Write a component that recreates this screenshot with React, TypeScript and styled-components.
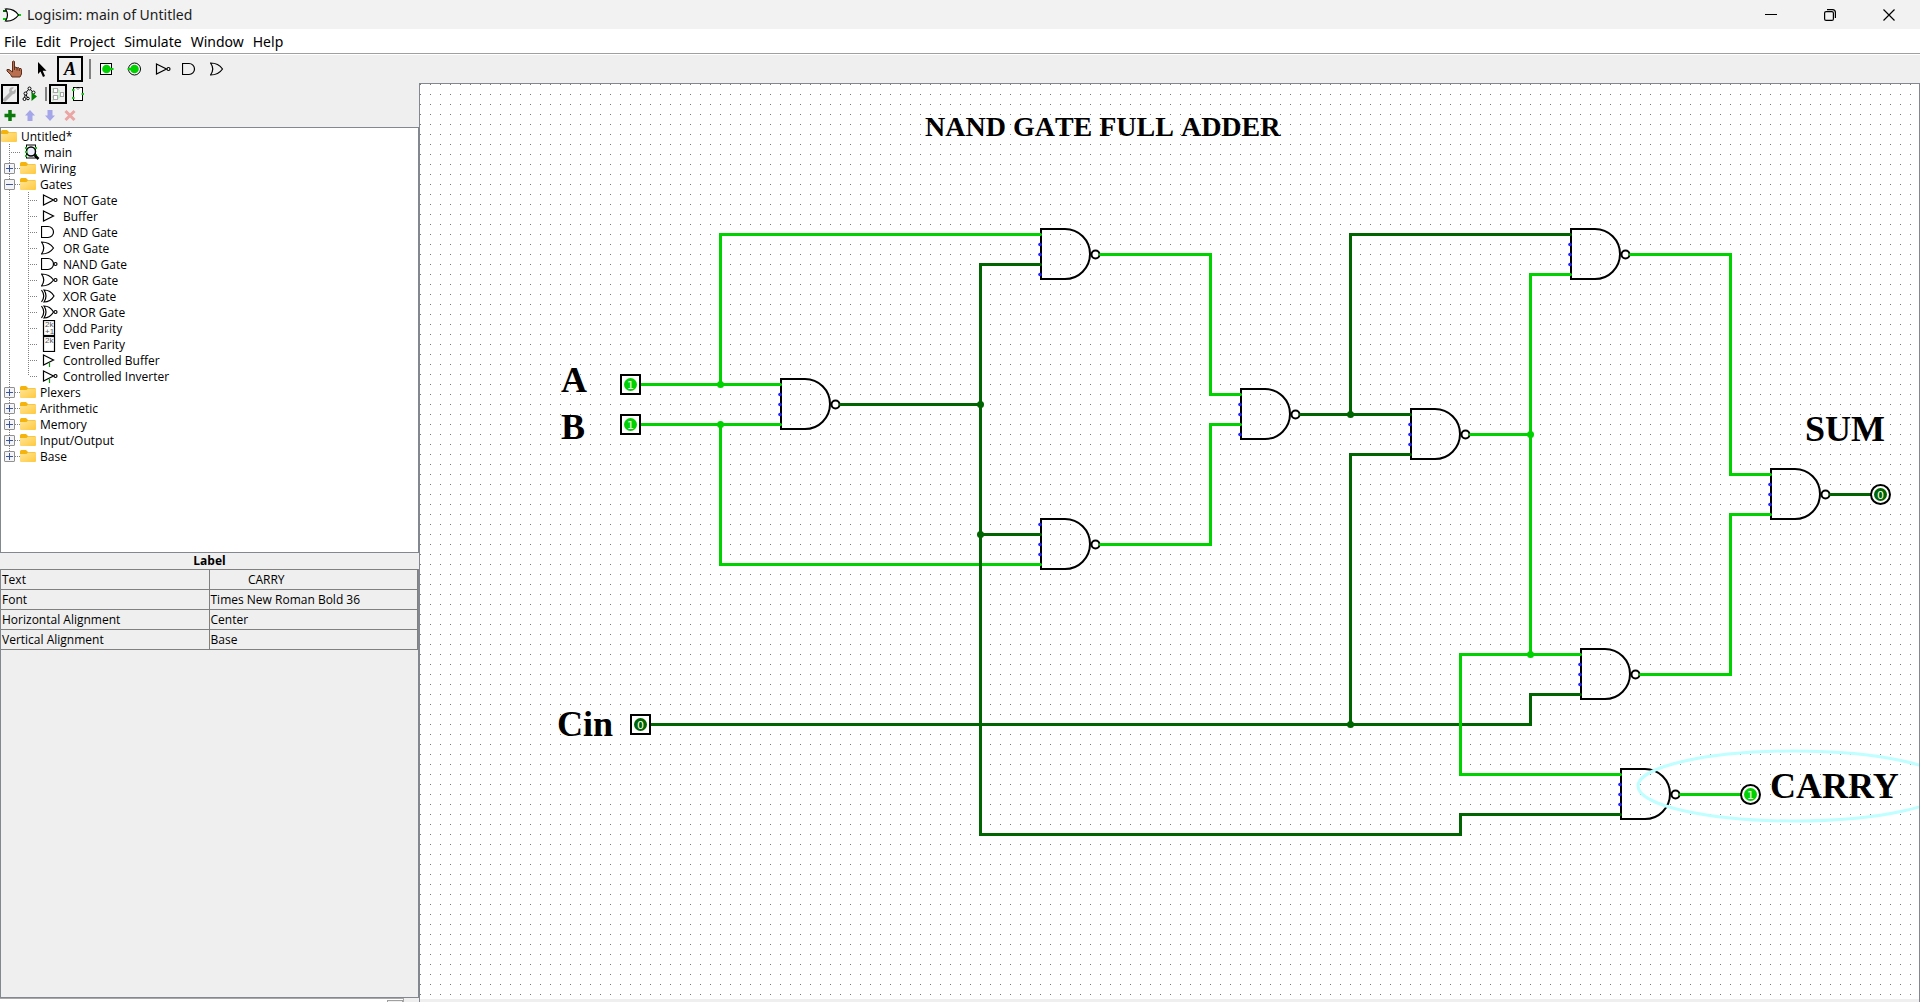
import React, { useState } from "react";
import styled, { createGlobalStyle } from "styled-components";

const ON = "#00d200";
const OFF = "#006400";
const EDGE = "#828790";
const PANEL = "#efefef";

const GlobalStyle = createGlobalStyle`
  * { box-sizing: border-box; }
  body { margin: 0; overflow: hidden; background: ${PANEL}; }
  button { font: inherit; color: inherit; background: none; border: 0; padding: 0; margin: 0; }
  svg { display: block; }
`;

const Window = styled.div`
  display: flex;
  flex-direction: column;
  height: 100vh;
  background: ${PANEL};
  color: #000;
  font: 12px/16px "Open Sans", "Noto Sans", sans-serif;
`;

const TitleBar = styled.header`
  display: flex;
  align-items: center;
  gap: 6px;
  height: 29px;
  padding: 0 2px 0 3px;
  background: #f2f2f2;
  font: 14px/20px "Noto Sans", sans-serif;
`;

const Title = styled.h1`
  flex: 1;
  margin: 0;
  font: inherit;
  color: #1c1c1c;
`;

const WindowControls = styled.div`
  display: flex;
`;

const WindowButton = styled.button`
  display: grid;
  place-items: center;
  width: 59px;
  height: 28px;
`;

const MenuBar = styled.nav`
  display: flex;
  gap: 9px;
  height: 26px;
  padding: 0 4px;
  background: #fff;
  border-bottom: 1px solid #fff;
  box-shadow: inset 0 -1px 0 #a0a0a0;
  font: 14px/25px "Noto Sans", sans-serif;
`;

const MenuItem = styled.button`
  line-height: 25px;
`;

const Toolbar = styled.div`
  display: flex;
  align-items: center;
  height: 28px;
`;

const ToolButton = styled.button<{ $selected?: boolean }>`
  display: grid;
  place-items: center;
  width: 26px;
  height: 26px;
  margin: 0 1px;
  box-shadow: inset 0 0 0 2px ${(p) => (p.$selected ? "#000" : "transparent")};
`;

const Separator = styled.span<{ $small?: boolean }>`
  width: 2px;
  height: ${(p) => (p.$small ? 14 : 20)}px;
  margin: 0 ${(p) => (p.$small ? 1 : 2)}px 0 5px;
  background: #808080;
`;

const Workspace = styled.main`
  display: grid;
  grid-template-columns: 419px minmax(0, 1fr);
  flex: 1;
  min-height: 0;
`;

const Sidebar = styled.aside`
  display: flex;
  flex-direction: column;
  min-height: 0;
`;

const MiniBar = styled.div<{ $tall?: boolean }>`
  display: flex;
  align-items: center;
  height: ${(p) => (p.$tall ? 23 : 21)}px;
  padding-bottom: ${(p) => (p.$tall ? 2 : 0)}px;
`;

const MiniButton = styled.button<{ $selected?: boolean }>`
  display: grid;
  place-items: center;
  width: 18px;
  height: 20px;
  margin: 0 1px;
  box-shadow: inset 0 0 0 2px ${(p) => (p.$selected ? "#000" : "transparent")};
`;

const Tree = styled.ul`
  flex: 425 1 0;
  min-height: 0;
  margin: 0;
  padding: 0;
  list-style: none;
  overflow: hidden;
  background: #fff;
  border: 1px solid ${EDGE};
`;

const TreeRow = styled.li`
  display: flex;
  align-items: center;
  gap: 4px;
  height: 16px;
  white-space: nowrap;
`;

const TreeLabel = styled.span`
  padding-top: 2px;
`;

const Guides = styled.span`
  display: flex;
  align-self: stretch;
  margin-right: -4px;
`;

const Guide = styled.span<{ $wide?: boolean }>`
  position: relative;
  display: flex;
  align-items: center;
  width: ${(p) => (p.$wide ? 21 : 19)}px;
  padding: 0 ${(p) => (p.$wide ? 3 : 0)}px 0 8px;
`;

const VerticalDots = styled.span<{ $last?: boolean }>`
  align-self: flex-start;
  width: 1px;
  height: ${(p) => (p.$last ? 8 : 16)}px;
  background: repeating-linear-gradient(#808080 0 1px, transparent 1px 2px);
`;

const HorizontalDots = styled.span`
  flex: 1;
  height: 1px;
  background: repeating-linear-gradient(90deg, transparent 0 1px, #808080 1px 2px);
`;

const Expander = styled.button`
  position: absolute;
  left: 3px;
  top: 3px;
  display: grid;
  place-items: center;
  width: 11px;
  height: 11px;
  background: #f4f4f6;
  border: 1px solid #919191;
  border-radius: 1px;
`;

const LeafIcon = styled.span`
  margin-left: 4px;
`;

const Attributes = styled.section`
  flex: 446 1 0;
  display: flex;
  flex-direction: column;
  min-height: 0;
`;

const AttributesTitle = styled.h2`
  margin: 0;
  font-size: 12px;
  line-height: 16px;
  text-align: center;
`;

const AttributesPane = styled.div`
  flex: 1;
  border: 1px solid ${EDGE};
  border-top: 0;
`;

const Table = styled.table`
  width: 100%;
  border-spacing: 0;
  table-layout: fixed;
  border-top: 1px solid #808080;
`;

const Cell = styled.td`
  height: 20px;
  padding: 0 1px;
  border-bottom: 1px solid #808080;
  border-right: 1px solid #808080;
  line-height: 19px;
  white-space: pre;
`;

const NameCell = styled(Cell).attrs({ as: "th", scope: "row" })`
  font-weight: 400;
  text-align: left;
`;

const ZoomBar = styled.div`
  display: flex;
  justify-content: flex-end;
  height: 4px;
  margin-right: 15px;
  overflow: hidden;
  background: #fff;
  border: solid #a8a8a8;
  border-width: 1px 1px 0 0;
`;

const ZoomStep = styled.button`
  width: 16px;
  height: 16px;
  margin-top: 1px;
  background: ${PANEL};
  border: 1px solid #a0a0a0;
`;

const CanvasPane = styled.section`
  display: flex;
  flex-direction: column;
  min-width: 0;
  min-height: 0;
  border: 1px solid ${EDGE};
  border-bottom: 0;
`;

const Drawing = styled.svg`
  flex: 1;
  width: 100%;
  min-height: 0;
  background: #fff;
`;

const ScrollTrack = styled.div`
  height: 3px;
  background: ${PANEL};
`;

const Caption = styled.text<{ $kerned: boolean }>`
  font-family: "Liberation Serif", serif;
  font-weight: 700;
  font-kerning: ${(p) => (p.$kerned ? "normal" : "none")};
`;

const PinValue = styled.text`
  font: 11px "DejaVu Sans", sans-serif;
  fill: #fff;
  text-anchor: middle;
`;

/* ---------- small icons ---------- */

type GlyphKind =
  | "not" | "buffer" | "and" | "or" | "nand" | "nor" | "xor" | "xnor"
  | "odd" | "even" | "cbuffer" | "cinverter";

const OR_BODY = "M.5 2Q8.500 2 12.500 8Q8.500 14 .5 14Q5 8 .5 2Z";
const XOR_BODY = "M3 2Q9.500 2 13 8Q9.500 14 3 14Q7 8 3 2ZM.5 2Q5 8 .5 14";
const XNOR_BODY = "M3 2Q9 2 12.500 8Q9 14 3 14Q7 8 3 2ZM.5 2Q5 8 .5 14";
const AND_BODY = "M.5 2.500H7A5.500 5.500 0 0 1 7 13.500H.5Z";
const TRIANGLE = "M2.500 3L12.500 8L2.500 13Z";

const bodies: Partial<Record<GlyphKind, string>> = {
  not: TRIANGLE, buffer: TRIANGLE, cbuffer: TRIANGLE, cinverter: TRIANGLE,
  and: AND_BODY, nand: AND_BODY, or: OR_BODY, nor: OR_BODY, xor: XOR_BODY, xnor: XNOR_BODY,
};

function GateGlyph({ kind }: { kind: GlyphKind }) {
  const inverted = ["not", "nand", "nor", "xnor", "cinverter"].includes(kind);
  const controlled = kind === "cbuffer" || kind === "cinverter";
  const parity = kind === "odd" || kind === "even";
  return (
    <svg width="18" height="16" fill="none" stroke="#000" strokeWidth="1.200" aria-hidden="true">
      {controlled && <path d="M8.500 11V15" stroke="#00a000" />}
      {bodies[kind] && <path d={bodies[kind]} />}
      {inverted && <circle cx="14.500" cy="8" r="1.500" fill="#fff" />}
      {parity && (
        <>
          <rect x="2.500" y=".5" width="11" height="15" />
          <g fill="#555" stroke="none" fontSize="8" fontFamily="Liberation Sans, sans-serif">
            <text x="4" y="7">2k</text>
            {kind === "odd" && <text x="4" y="14">+1</text>}
          </g>
        </>
      )}
    </svg>
  );
}

function Folder() {
  return (
    <svg width="16" height="16" aria-hidden="true">
      <defs>
        <linearGradient id="folderFill" x1="0" y1="0" x2="1" y2="1">
          <stop offset="0" stopColor="#ffe59a" />
          <stop offset="1" stopColor="#ffc93c" />
        </linearGradient>
      </defs>
      <path d="M0 3.500Q0 2 1.500 2H6L8 4H14.500Q16 4 16 5.500V8H0Z" fill="#f5b30e" />
      <path d="M0 6H6.500L8 4.500H15Q16 4.500 16 5.500V13Q16 14 15 14H1Q0 14 0 13Z" fill="url(#folderFill)" />
    </svg>
  );
}

function CircuitIcon() {
  return (
    <svg width="16" height="16" aria-hidden="true">
      <rect x="2.500" y="1" width="9" height="13" fill="#fff" stroke="#000" />
      <circle cx="7" cy="7.500" r="4.500" fill="#eeeeff" stroke="#000" strokeWidth="1.500" />
      <path d="M1 4H3M1 8H3M1 12H3M11 4H13M11 11H13" stroke={ON} strokeWidth="2" />
      <path d="M10.500 11L14.500 15" stroke="#000" strokeWidth="2.500" />
    </svg>
  );
}

function LogoIcon() {
  return (
    <svg width="18" height="16" fill="none" aria-hidden="true">
      <path d="M0 4H5" stroke="#006400" strokeWidth="2" />
      <path d="M0 12H5M14 8H18" stroke={ON} strokeWidth="2" />
      <path d="M2.500 2Q11 1.500 15.500 8Q11 14.500 2.500 14Q6.500 8 2.500 2Z" fill="#fff" stroke="#000" strokeWidth="1.200" />
    </svg>
  );
}

function HandIcon() {
  return (
    <svg width="18" height="18" aria-hidden="true">
      <path
        d="M7.500 1.500Q8.500 .5 9.500 1.500V7.500L11 7L12 8L13.500 7.500L14.500 8.500L16 8.500L16.500 9.500V14L15 17H7L5.500 14.500L2 11V9.500L4 9.500L7.500 12Z"
        fill="#ba6f50" stroke="#5a2d1c"
      />
      <path d="M9.500 7V10M12 8V10.500M14.300 8.500V11" stroke="#5a2d1c" />
    </svg>
  );
}

function PointerIcon() {
  return (
    <svg width="18" height="18" aria-hidden="true">
      <path d="M5 2V14L7.500 11.500L10 17L12 16L9.700 10.800H13.500Z" fill="#000" />
    </svg>
  );
}

function TextIcon() {
  return (
    <svg width="22" height="22" aria-hidden="true">
      <text x="11" y="17" textAnchor="middle" fontFamily="Liberation Serif, serif" fontSize="18" fontWeight="700" fontStyle="italic">A</text>
    </svg>
  );
}

function PinIcon({ round }: { round?: boolean }) {
  return (
    <svg width="18" height="18" aria-hidden="true">
      {round
        ? <circle cx="8.500" cy="9" r="6" fill="#fff" stroke="#000" />
        : <rect x="2.500" y="3.500" width="11" height="11" fill="#fff" stroke="#000" />}
      <path d={round ? "M1.500 9H8" : "M8 9H15.500"} stroke={ON} strokeWidth="2" />
      <circle cx="8.500" cy="9" r="4.300" fill={ON} />
    </svg>
  );
}

function WrenchIcon() {
  return (
    <svg width="14" height="16" aria-hidden="true">
      <path d="M1.800 13.800L8.500 7" stroke="#b0b0b0" strokeWidth="3.500" strokeLinecap="round" />
      <path d="M12.500 3L10 5.500L8.500 4L11 1.500Q8.500 .5 6.800 2.200Q5.500 4 6.500 6.500L8 8Q10.500 9 12.200 7.200Q13.700 5.500 12.500 3Z" fill="#b0b0b0" />
    </svg>
  );
}

function SimTreeIcon() {
  return (
    <svg width="16" height="16" fill="none" stroke="#000" aria-hidden="true">
      <path d="M7 3L3.500 7L2.500 12M8 3L11.500 7M3.500 7L5.500 12" />
      <circle cx="7.500" cy="2.500" r="1.500" fill="#fff" />
      <circle cx="3.500" cy="7.500" r="1.500" fill="#fff" />
      <circle cx="11.500" cy="6.500" r="1.500" fill="#fff" />
      <circle cx="2.500" cy="13" r="1.500" fill="#fff" />
      <circle cx="6" cy="12.500" r="1.300" fill="#fff" />
      <path d="M9.500 6L15 10.500L9.500 15Z" fill="#008000" stroke="none" />
    </svg>
  );
}

function LayoutIcon() {
  return (
    <svg width="16" height="16" fill="none" aria-hidden="true">
      <path d="M2 3H4M2 6H4M2 11H4M2 14H4M7 4H9V7H12M7 12H9V9H12" stroke="#a5e8a5" />
      <g fill="#fff" stroke="#a8a8a8">
        <rect x="3.500" y="2.500" width="4" height="4" />
        <rect x="3.500" y="9.500" width="4" height="4" />
        <rect x="10.500" y="6.500" width="3" height="4" />
      </g>
    </svg>
  );
}

function AppearanceIcon() {
  return (
    <svg width="16" height="16" fill="none" aria-hidden="true">
      <rect x="3.500" y="1.500" width="9" height="13" fill="#fff" stroke="#000" />
      <path d="M6 1.500Q8 5 10 1.500" stroke="#909090" />
      <path d="M2 4H4.500M2 12H4.500M11.500 8H14" stroke={ON} strokeWidth="2" />
    </svg>
  );
}

function EditIcon({ kind }: { kind: "add" | "up" | "down" | "remove" }) {
  return (
    <svg width="14" height="16" aria-hidden="true">
      {kind === "add" && <path d="M7 3V14M1.500 8.500H12.500" stroke="#0a7a0a" strokeWidth="3.500" />}
      {kind === "up" && <path d="M7 3L12 8.500H9.500V14H4.500V8.500H2Z" fill="#a5a5ea" />}
      {kind === "down" && <path d="M7 14L12 8.500H9.500V3H4.500V8.500H2Z" fill="#a5a5ea" />}
      {kind === "remove" && <path d="M2.500 4L11.500 13M11.500 4L2.500 13" stroke="#eba5a5" strokeWidth="3" />}
    </svg>
  );
}

/* ---------- explorer tree ---------- */

const gates: [GlyphKind, string][] = [
  ["not", "NOT Gate"], ["buffer", "Buffer"], ["and", "AND Gate"], ["or", "OR Gate"],
  ["nand", "NAND Gate"], ["nor", "NOR Gate"], ["xor", "XOR Gate"], ["xnor", "XNOR Gate"],
  ["odd", "Odd Parity"], ["even", "Even Parity"],
  ["cbuffer", "Controlled Buffer"], ["cinverter", "Controlled Inverter"],
];
const libraries = ["Wiring", "Gates", "Plexers", "Arithmetic", "Memory", "Input/Output", "Base"];

function Library({ name, last, open, onToggle }: { name: string; last: boolean; open: boolean; onToggle: () => void }) {
  return (
    <>
      <TreeRow role="treeitem" aria-expanded={open}>
        <Guides>
          <Guide>
            <VerticalDots $last={last} />
            <HorizontalDots />
            <Expander onClick={onToggle} aria-label={`Toggle ${name}`}>
              <svg width="9" height="9" stroke="#3a55a0" aria-hidden="true">
                <path d={open ? "M1 4.500H8" : "M1 4.500H8M4.500 1V8"} />
              </svg>
            </Expander>
          </Guide>
        </Guides>
        <Folder />
        <TreeLabel>{name}</TreeLabel>
      </TreeRow>
      {open && name === "Gates" && gates.map(([kind, label], i) => (
        <TreeRow key={kind} role="treeitem">
          <Guides>
            <Guide><VerticalDots /></Guide>
            <Guide $wide>
              <VerticalDots $last={i === gates.length - 1} />
              <HorizontalDots />
            </Guide>
          </Guides>
          <GateGlyph kind={kind} />
          <TreeLabel>{label}</TreeLabel>
        </TreeRow>
      ))}
    </>
  );
}

function Explorer() {
  const [open, setOpen] = useState<string[]>(["Gates"]);
  const toggle = (n: string) => setOpen((o) => (o.includes(n) ? o.filter((x) => x !== n) : [...o, n]));
  return (
    <Tree role="tree" aria-label="Project">
      <TreeRow role="treeitem"><Folder /><TreeLabel>Untitled*</TreeLabel></TreeRow>
      <TreeRow role="treeitem">
        <Guides><Guide><VerticalDots /><HorizontalDots /></Guide></Guides>
        <LeafIcon><CircuitIcon /></LeafIcon>
        <TreeLabel>main</TreeLabel>
      </TreeRow>
      {libraries.map((name, i) => (
        <Library key={name} name={name} last={i === libraries.length - 1} open={open.includes(name)} onToggle={() => toggle(name)} />
      ))}
    </Tree>
  );
}

/* ---------- circuit, in units of one pixel on a ten-pixel grid ---------- */

const wires: { on: boolean; d: string }[] = [
  { on: true, d: "M220 300H360" },
  { on: true, d: "M220 340H360" },
  { on: true, d: "M300 300V150H620" },
  { on: true, d: "M300 340V480H620" },
  { on: false, d: "M420 320H560" },
  { on: false, d: "M620 180H560V750H1040V730H1200" },
  { on: false, d: "M560 450H620" },
  { on: true, d: "M680 170H790V310H820" },
  { on: true, d: "M680 460H790V340H820" },
  { on: false, d: "M880 330H990" },
  { on: false, d: "M930 330V150H1150" },
  { on: false, d: "M990 370H930V640" },
  { on: false, d: "M230 640H1110V610H1160" },
  { on: true, d: "M1050 350H1110" },
  { on: true, d: "M1150 190H1110V570" },
  { on: true, d: "M1160 570H1040V690H1200" },
  { on: true, d: "M1210 170H1310V390H1350" },
  { on: true, d: "M1220 590H1310V430H1350" },
  { on: false, d: "M1410 410H1450" },
  { on: true, d: "M1260 710H1320" },
];

const nands: { x: number; y: number; free: number[] }[] = [
  { x: 360, y: 320, free: [-10, 0, 10] },
  { x: 620, y: 170, free: [-10, 0, 20] },
  { x: 620, y: 460, free: [-20, 0, 10] },
  { x: 820, y: 330, free: [-10, 0, 20] },
  { x: 990, y: 350, free: [-10, 0, 10] },
  { x: 1150, y: 170, free: [-10, 0, 10] },
  { x: 1350, y: 410, free: [-10, 0, 10] },
  { x: 1160, y: 590, free: [-10, 0, 10] },
  { x: 1200, y: 710, free: [-10, 0, 10] },
];

const junctions: [number, number, boolean][] = [
  [300, 300, true], [300, 340, true], [560, 320, false], [560, 450, false],
  [930, 330, false], [1110, 350, true], [1110, 570, true], [930, 640, false],
];

const pins: { x: number; y: number; on: boolean; output?: boolean }[] = [
  { x: 210, y: 300, on: true },
  { x: 210, y: 340, on: true },
  { x: 220, y: 640, on: false },
  { x: 1460, y: 410, on: false, output: true },
  { x: 1330, y: 710, on: true, output: true },
];

const captions: { x: number; y: number; size: number; text: string }[] = [
  { x: 505, y: 52, size: 28, text: "NAND GATE FULL ADDER" },
  { x: 141, y: 308, size: 36, text: "A" },
  { x: 141, y: 355, size: 36, text: "B" },
  { x: 137, y: 652, size: 36, text: "Cin" },
  { x: 1385, y: 357, size: 36, text: "SUM" },
  { x: 1350, y: 714, size: 36, text: "CARRY" },
];

function Nand({ x, y, free }: { x: number; y: number; free: number[] }) {
  return (
    <g transform={`translate(${x} ${y})`} fill="none" stroke="#000" strokeWidth="2">
      <path d="M1 -25H25A25 25 0 0 1 25 25H1Z" />
      <circle cx="55.500" cy=".5" r="4" />
      {free.map((dy) => (
        <circle key={dy} cx="0" cy={dy + 0.5} r="1.800" fill="#2222ff" stroke="none" />
      ))}
    </g>
  );
}

function Pin({ x, y, on, output }: { x: number; y: number; on: boolean; output?: boolean }) {
  const color = on ? ON : OFF;
  return (
    <g transform={`translate(${x + 0.5} ${y + 0.5})`}>
      {output
        ? <circle r="9.500" fill="#fff" stroke="#000" strokeWidth="2" />
        : <rect x="-9.500" y="-9.500" width="19" height="19" fill="#fff" stroke="#000" strokeWidth="2" />}
      <circle r="6.500" fill={color} />
      <PinValue y="4">{on ? "1" : "0"}</PinValue>
    </g>
  );
}

function Circuit() {
  return (
    <Drawing role="img" aria-label="NAND gate full adder circuit">
      <defs>
        <pattern id="grid" width="10" height="10" patternUnits="userSpaceOnUse">
          <rect width="1" height="1" fill="#777" />
        </pattern>
      </defs>
      <rect width="100%" height="100%" fill="url(#grid)" />
      {nands.map((g) => <Nand key={`${g.x},${g.y}`} {...g} />)}
      <g transform="translate(.5 .5)" fill="none" strokeWidth="3" strokeLinecap="round">
        {wires.map((w) => <path key={w.d} d={w.d} stroke={w.on ? ON : OFF} />)}
        {junctions.map(([x, y, on]) => (
          <circle key={`${x},${y}`} cx={x} cy={y} r="3.500" fill={on ? ON : OFF} stroke="none" />
        ))}
      </g>
      {pins.map((p) => <Pin key={`${p.x},${p.y}`} {...p} />)}
      <ellipse cx="1374" cy="702" rx="156" ry="35" fill="none" stroke="#bfffff" strokeWidth="3" />
      {captions.map((c) => (
        <Caption key={c.text} x={c.x} y={c.y} fontSize={c.size} $kerned={c.size > 28}>{c.text}</Caption>
      ))}
    </Drawing>
  );
}

/* ---------- window ---------- */

const attributes: [string, string][] = [
  ["Text", "            CARRY"],
  ["Font", "Times New Roman Bold 36"],
  ["Horizontal Alignment", "Center"],
  ["Vertical Alignment", "Base"],
];

export default function App() {
  return (
    <Window>
      <GlobalStyle />
      <TitleBar>
        <LogoIcon />
        <Title>Logisim: main of Untitled</Title>
        <WindowControls>
          <WindowButton aria-label="Minimize">
            <svg width="12" height="12" stroke="#000"><path d="M0 5.500H12" /></svg>
          </WindowButton>
          <WindowButton aria-label="Restore">
            <svg width="12" height="12" fill="none" stroke="#000" strokeWidth="1.200">
              <rect x=".6" y="2.600" width="8.800" height="8.800" rx="1.500" />
              <path d="M3 .6H8.500Q11.400 .6 11.400 3.500V9" />
            </svg>
          </WindowButton>
          <WindowButton aria-label="Close">
            <svg width="12" height="12" stroke="#000" strokeWidth="1.200"><path d="M.5 .5L11.500 11.500M11.500 .5L.5 11.500" /></svg>
          </WindowButton>
        </WindowControls>
      </TitleBar>
      <MenuBar aria-label="Menu">
        {["File", "Edit", "Project", "Simulate", "Window", "Help"].map((m) => <MenuItem key={m}>{m}</MenuItem>)}
      </MenuBar>
      <Toolbar role="toolbar" aria-label="Tools">
        <ToolButton aria-label="Poke"><HandIcon /></ToolButton>
        <ToolButton aria-label="Select"><PointerIcon /></ToolButton>
        <ToolButton aria-label="Text" $selected><TextIcon /></ToolButton>
        <Separator />
        <ToolButton aria-label="Input pin"><PinIcon /></ToolButton>
        <ToolButton aria-label="Output pin"><PinIcon round /></ToolButton>
        <ToolButton aria-label="NOT gate"><GateGlyph kind="not" /></ToolButton>
        <ToolButton aria-label="AND gate"><GateGlyph kind="and" /></ToolButton>
        <ToolButton aria-label="OR gate"><GateGlyph kind="or" /></ToolButton>
      </Toolbar>
      <Workspace>
        <Sidebar>
          <MiniBar>
            <MiniButton aria-label="Project tools" $selected><WrenchIcon /></MiniButton>
            <MiniButton aria-label="Simulation tree"><SimTreeIcon /></MiniButton>
            <Separator $small />
            <MiniButton aria-label="Edit layout" $selected><LayoutIcon /></MiniButton>
            <MiniButton aria-label="Edit appearance"><AppearanceIcon /></MiniButton>
          </MiniBar>
          <MiniBar $tall>
            <MiniButton aria-label="Add circuit"><EditIcon kind="add" /></MiniButton>
            <MiniButton aria-label="Move up"><EditIcon kind="up" /></MiniButton>
            <MiniButton aria-label="Move down"><EditIcon kind="down" /></MiniButton>
            <MiniButton aria-label="Remove circuit"><EditIcon kind="remove" /></MiniButton>
          </MiniBar>
          <Explorer />
          <Attributes>
            <AttributesTitle>Label</AttributesTitle>
            <AttributesPane>
              <Table>
                <tbody>
                  {attributes.map(([name, value]) => (
                    <tr key={name}>
                      <NameCell>{name}</NameCell>
                      <Cell>{value}</Cell>
                    </tr>
                  ))}
                </tbody>
              </Table>
            </AttributesPane>
          </Attributes>
          <ZoomBar><ZoomStep aria-label="Zoom" /></ZoomBar>
        </Sidebar>
        <CanvasPane>
          <Circuit />
          <ScrollTrack />
        </CanvasPane>
      </Workspace>
    </Window>
  );
}
